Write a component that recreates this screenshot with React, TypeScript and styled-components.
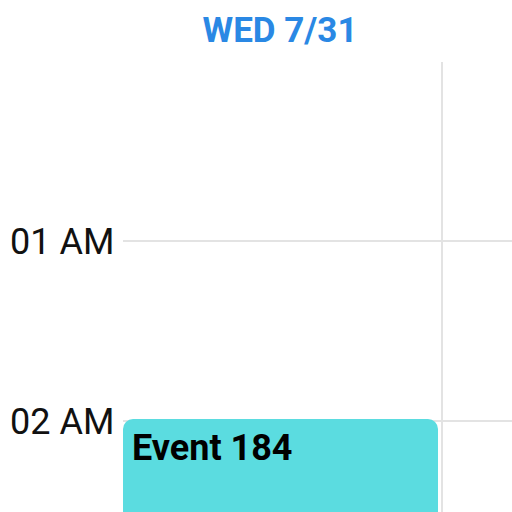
import styled, { createGlobalStyle } from "styled-components";

const GlobalStyle = createGlobalStyle`
    html, body {
        margin: 0;
        padding: 0;
        background: #ffffff;
        overflow: hidden;
    }
    body {
        font-family: Roboto, "Liberation Sans", sans-serif;
    }
`;

const HOUR = 180;
const GUTTER = 123;
const COL = 320;

const hours = ["00 AM", "01 AM", "02 AM"];

function App() {
    return (
        <>
            <GlobalStyle />
            <Screen>
                <HeaderRow>
                    <GutterSpace />
                    <DayTitle $active>WED 7/31</DayTitle>
                </HeaderRow>
                <Body>
                    <Gutter>
                        {hours.slice(1).map((h) => (
                            <HourLabel key={h}>{h}</HourLabel>
                        ))}
                    </Gutter>
                    <DayColumn>
                        {hours.map((h) => (
                            <HourCell key={h} />
                        ))}
                        <EventBlock $top={2 * HOUR - 3} $height={HOUR}>
                            Event 184
                        </EventBlock>
                    </DayColumn>
                    <DayColumn>
                        {hours.map((h) => (
                            <HourCell key={h} />
                        ))}
                    </DayColumn>
                </Body>
            </Screen>
        </>
    );
}

export default App;

const Screen = styled.div`
    width: 512px;
    height: 512px;
    display: flex;
    flex-direction: column;
    overflow: hidden;
`;

const HeaderRow = styled.div`
    display: flex;
    flex-shrink: 0;
    height: 62px;
`;

const GutterSpace = styled.div`
    width: ${GUTTER}px;
    flex-shrink: 0;
`;

const DayTitle = styled.div<{ $active?: boolean }>`
    width: ${COL}px;
    flex-shrink: 0;
    display: flex;
    justify-content: center;
    padding: 11px 6px 0 0;
    box-sizing: border-box;
    font-size: 35px;
    font-weight: 700;
    line-height: 40px;
    color: ${({ $active }) => ($active ? "#2a88e4" : "#555")};
`;

const Body = styled.div`
    display: flex;
    flex: 1;
    min-height: 0;
`;

const Gutter = styled.div`
    width: ${GUTTER}px;
    flex-shrink: 0;
    display: flex;
    flex-direction: column;
    padding-top: ${HOUR / 2}px;
`;

const HourLabel = styled.div`
    height: ${HOUR}px;
    flex-shrink: 0;
    display: flex;
    align-items: center;
    padding-left: 10px;
    font-size: 36px;
    color: #111;
`;

const DayColumn = styled.div`
    position: relative;
    width: ${COL}px;
    flex-shrink: 0;
    border-right: 2px solid #e3e3e3;
    box-sizing: border-box;
`;

const HourCell = styled.div`
    height: ${HOUR}px;
    border-bottom: 2px solid #e3e3e3;
    box-sizing: border-box;
`;

const EventBlock = styled.div<{ $top: number; $height: number }>`
    position: absolute;
    left: 0;
    right: 3px;
    top: ${({ $top }) => $top}px;
    height: ${({ $height }) => $height}px;
    background: #5bdce0;
    border-radius: 10px;
    padding: 8px 9px;
    box-sizing: border-box;
    font-size: 36px;
    font-weight: 700;
    line-height: 42px;
    color: #000;
`;
